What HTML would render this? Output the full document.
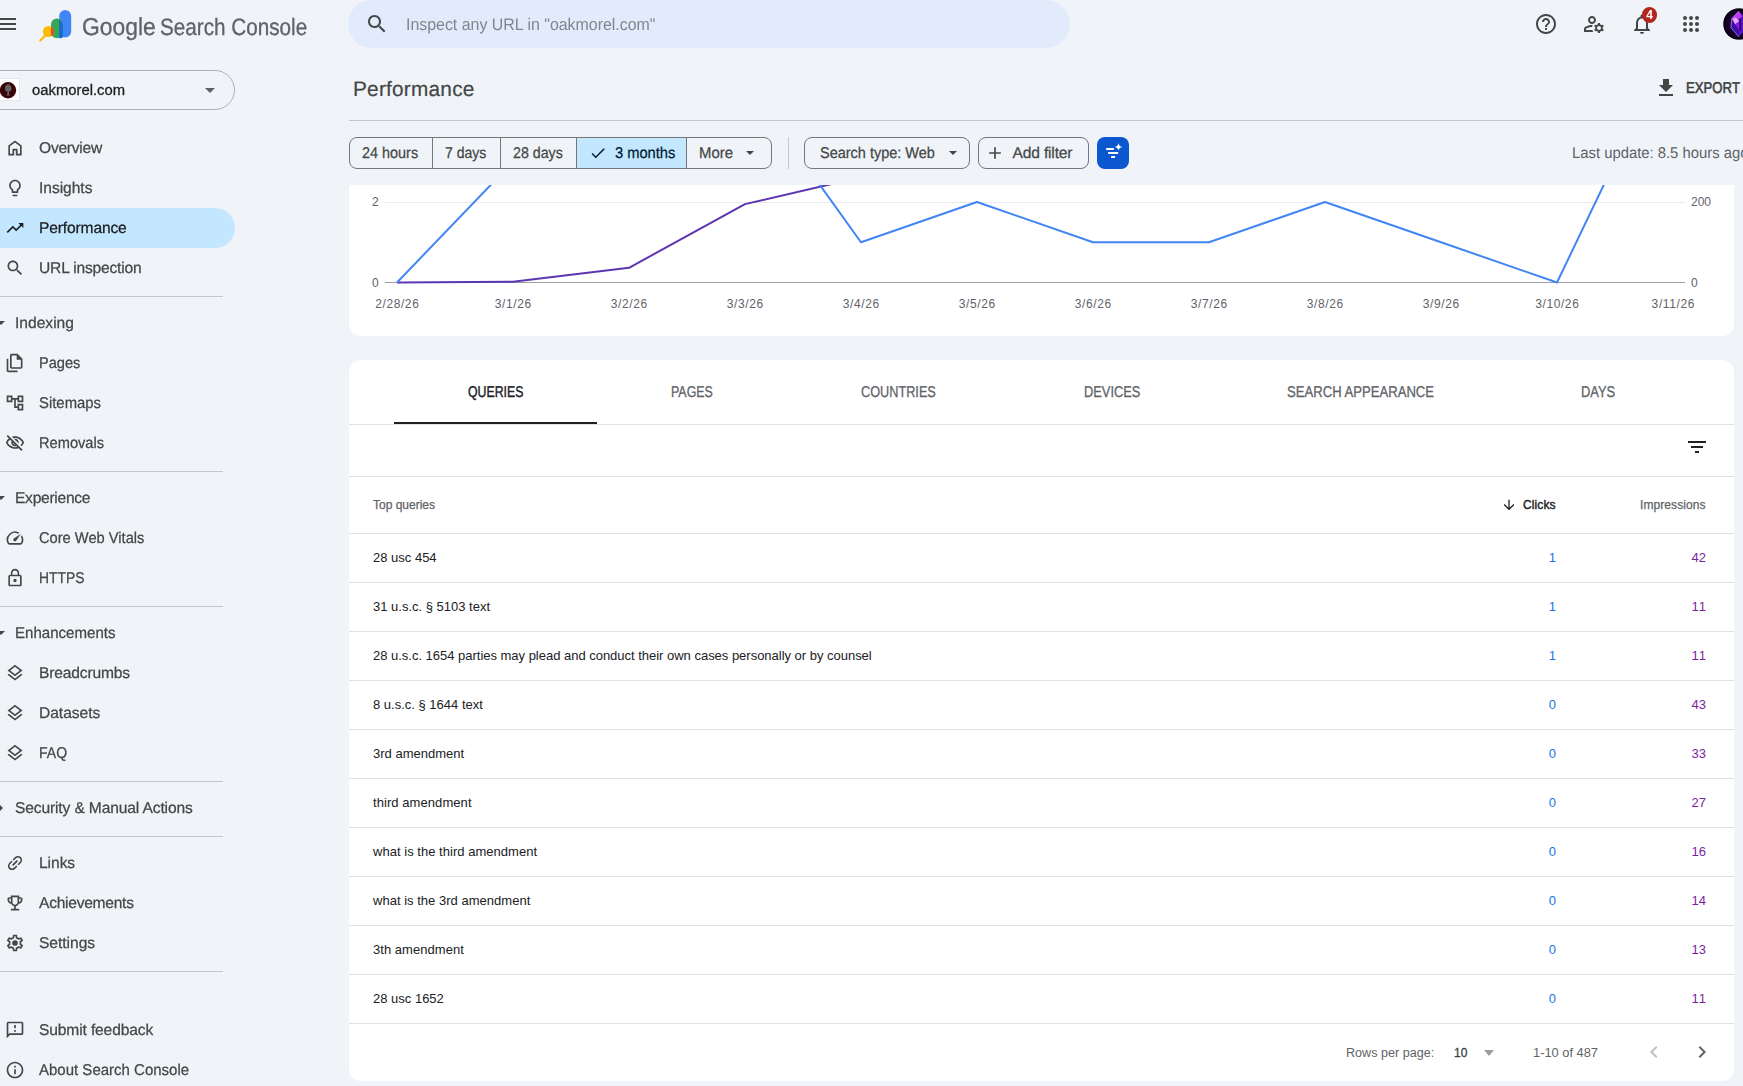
<!DOCTYPE html>
<html>
<head>
<meta charset="utf-8">
<title>Performance</title>
<style>
*{box-sizing:border-box;margin:0;padding:0}
html,body{width:1743px;height:1086px;overflow:hidden;background:#f0f4f9;font-family:"Liberation Sans",sans-serif;color:#1f1f1f}
#hdr,#side{position:absolute;left:0;top:0;width:1743px;height:1086px;will-change:transform}
#hdr{height:60px}
#hdr,#side{z-index:1}
#main{position:absolute;left:0;top:0;width:1743px;height:1086px}
.abs{position:absolute}
svg{display:block}
.t{position:absolute;white-space:nowrap;line-height:1}
/* nav */
.nav{position:absolute;left:0;height:40px;width:235px}
.nav svg{position:absolute;left:5px;top:10px;width:20px;height:20px;fill:#444746}
.nav span{position:absolute;left:39px;top:13px;font-size:15.600px;line-height:16px;text-rendering:geometricPrecision;color:#444746;white-space:nowrap;-webkit-text-stroke:0.25px #444746}
.nav.sel{background:#c2e7ff;border-radius:0 20px 20px 0}
.nav.sel span{color:#1b1c1d;-webkit-text-stroke:0.25px #1b1c1d}
.nav.sel svg{fill:#1b1c1d}
.grp span{left:15px}
.grp i{position:absolute;left:-3px;top:18px;width:0;height:0;border-left:4px solid transparent;border-right:4px solid transparent;border-top:4px solid #444746}
.hr{position:absolute;left:0;width:223px;height:1px;background:#c4c7c5}
/* chips */
.chip{position:absolute;top:137px;height:32px;border:1px solid #747775;font-size:14px;color:#1f1f1f;line-height:30px;white-space:nowrap;-webkit-text-stroke:0.2px #1f1f1f}
/* table */
.row{position:absolute;left:349px;width:1385px;height:49px;border-top:1px solid #e0e0e0}
.row .q{position:absolute;left:24px;top:16px;font-size:13px;line-height:15px;color:#202124;white-space:nowrap}
.row .c{position:absolute;right:178px;top:16px;font-size:13px;line-height:15px;color:#1a73e8}
.row .i{position:absolute;right:28px;top:16px;font-size:13px;line-height:15px;color:#7b1fa2}
.tab{position:absolute;top:385px;font-size:15.600px;line-height:16px;text-rendering:geometricPrecision;color:#5f6368;white-space:nowrap;-webkit-text-stroke:0.3px #5f6368;transform-origin:0 50%}
.xl{position:absolute;top:297px;font-size:12px;line-height:14px;color:#5f6368;white-space:nowrap;transform:translateX(-50%);letter-spacing:.6px;padding-left:.6px}
.ch{top:146px;font-size:15.600px;line-height:16px;text-rendering:geometricPrecision;color:#444746;-webkit-text-stroke:0.25px currentColor}
.ax{font-size:12px;line-height:14px;color:#5f6368}
.th{top:498px;font-size:12px;line-height:14px;-webkit-text-stroke:0.25px currentColor}
.ft{top:1046px;font-size:12px;line-height:14px;color:#5f6368}
.rt i{left:-1px;top:15.500px;border-top:4px solid transparent;border-bottom:4px solid transparent;border-left:4px solid #444746;border-right:none}
</style>
<style id="fit">
#insp{transform-origin:0 78%;transform:scale(0.948,1)}
#prop{transform-origin:0 78%;transform:scale(1.058,1)}
#n1{letter-spacing:-0.25px}
#n2{letter-spacing:-0.04px}
#n3{letter-spacing:-0.15px}
#n4{letter-spacing:-0.19px}
#n5{letter-spacing:0.00px}
#n6{transform-origin:0 78%;transform:scale(0.936,1)}
#n7{transform-origin:0 78%;transform:scale(0.954,1)}
#n8{transform-origin:0 78%;transform:scale(0.938,1)}
#n9{letter-spacing:-0.28px}
#n10{transform-origin:0 78%;transform:scale(0.940,1)}
#n11{transform-origin:0 78%;transform:scale(0.890,1)}
#n12{transform-origin:0 78%;transform:scale(0.966,1)}
#n13{letter-spacing:-0.17px}
#n14{letter-spacing:-0.04px}
#n15{transform-origin:0 78%;transform:scale(0.900,1)}
#n16{letter-spacing:-0.14px}
#n17{letter-spacing:-0.06px}
#n18{letter-spacing:-0.27px}
#n19{letter-spacing:-0.04px}
#n20{letter-spacing:-0.14px}
#n21{transform-origin:0 78%;transform:scale(0.962,1)}
#ttl{letter-spacing:0.23px}
#c1{transform-origin:0 78%;transform:scale(0.925,1)}
#c2{transform-origin:0 78%;transform:scale(0.900,1)}
#c3{transform-origin:0 78%;transform:scale(0.911,1)}
#c4{transform-origin:0 78%;transform:scale(0.941,1)}
#c5{transform-origin:0 78%;transform:scale(0.956,1)}
#c6{transform-origin:0 78%;transform:scale(0.929,1)}
#c7{letter-spacing:-0.17px}
#t1{transform-origin:0 78%;transform:scale(0.789,1)}
#t2{transform-origin:0 78%;transform:scale(0.796,1)}
#t3{transform-origin:0 78%;transform:scale(0.815,1)}
#t4{transform-origin:0 78%;transform:scale(0.824,1)}
#t5{transform-origin:0 78%;transform:scale(0.840,1)}
#t6{transform-origin:0 78%;transform:scale(0.829,1)}
#h1{letter-spacing:0.00px}
#h2{letter-spacing:0.10px}
#h3{letter-spacing:0.08px}
#f1{transform-origin:0 78%;transform:scale(1.049,1)}
#f2{letter-spacing:0.20px}
#f3{transform-origin:0 78%;transform:scale(1.070,1)}
</style>
</head>
<body>
<!-- ===== HEADER ===== -->
<div id="hdr">
  <svg class="abs" style="left:-5px;top:12px;width:24px;height:24px" viewBox="0 0 24 24"><path fill="#444746" d="M3 18h18v-2H3v2zm0-5h18v-2H3v2zm0-7v2h18V6H3z"/></svg>
  <!-- logo -->
  <svg class="abs" style="left:38px;top:8px;width:36px;height:36px" viewBox="0 0 36 36">
    <rect x="21.200" y="2" width="12" height="27.600" rx="6" fill="#4285f4"/>
    <rect x="13" y="10.500" width="11.800" height="19.700" rx="5.900" fill="#34a853"/>
    <path d="M21.200 30.200 V12 A5.900 5.900 0 0 1 24.800 16.400 V29.600 A6 6 0 0 1 21.200 30.200 Z" fill="#1967d2"/>
    <line x1="2.300" y1="32.500" x2="7.500" y2="27.300" stroke="#fbbc04" stroke-width="2.200" stroke-linecap="round"/>
    <circle cx="10.400" cy="23.500" r="5.500" fill="#fbbc04"/>
    <path d="M13 18.650 A5.500 5.500 0 0 1 13 28.350 Z" fill="#ea4335"/>
  </svg>
  <div class="t" id="gsa" style="left:82px;top:14px;font-size:24.500px;line-height:28px;color:#5f6368;-webkit-text-stroke:.3px #5f6368;text-rendering:geometricPrecision;transform-origin:0 50%;transform:scaleX(.933)">Google</div>
  <div class="t" id="gsb" style="left:159.500px;top:15px;font-size:23.600px;line-height:26px;color:#5f6368;-webkit-text-stroke:.3px #5f6368;text-rendering:geometricPrecision;transform-origin:0 50%;transform:scaleX(.877)">Search Console</div>
  <!-- search bar -->
  <div class="abs" style="left:348px;top:0;width:722px;height:48px;border-radius:24px;background:#e2ebfc"></div>
  <svg class="abs" style="left:365px;top:12px;width:24px;height:24px" viewBox="0 0 24 24"><path fill="#444746" d="M15.5 14h-.79l-.28-.27C15.41 12.59 16 11.11 16 9.5 16 5.91 13.09 3 9.5 3S3 5.91 3 9.5 5.91 16 9.5 16c1.61 0 3.09-.59 4.23-1.57l.27.28v.79l5 4.99L20.49 19l-4.99-5zm-6 0C7.01 14 5 11.990 5 9.5S7.01 5 9.500 5 14 7.010 14 9.500 11.990 14 9.500 14z"/></svg>
  <div class="t" id="insp" style="left:406.200px;top:16px;font-size:16.800px;line-height:18px;text-rendering:geometricPrecision;color:#80868b">Inspect any URL in "oakmorel.com"</div>
  <!-- right icons -->
  <svg class="abs" style="left:1534px;top:12px;width:24px;height:24px" viewBox="0 0 24 24"><path fill="#444746" d="M11 18h2v-2h-2v2zm1-16C6.480 2 2 6.480 2 12s4.480 10 10 10 10-4.480 10-10S17.520 2 12 2zm0 18c-4.410 0-8-3.590-8-8s3.590-8 8-8 8 3.590 8 8-3.590 8-8 8zm0-14c-2.210 0-4 1.790-4 4h2c0-1.100.9-2 2-2s2 .9 2 2c0 2-3 1.750-3 5h2c0-2.250 3-2.500 3-5 0-2.210-1.790-4-4-4z"/></svg>
  <svg class="abs" style="left:1582px;top:12px;width:24px;height:24px" viewBox="0 0 24 24" fill="#444746"><path d="M4 18v-.65c0-.34.16-.66.41-.81C6.100 15.530 8.030 15 10 15c.03 0 .05 0 .08.010.1-.7.3-1.370.59-1.980-.22-.02-.44-.03-.67-.03-2.420 0-4.680.67-6.610 1.820-.88.52-1.390 1.500-1.390 2.530V20h9.260c-.42-.6-.75-1.280-.97-2H4z"/><path d="M10 12c2.210 0 4-1.790 4-4s-1.790-4-4-4-4 1.790-4 4 1.790 4 4 4zm0-6c1.100 0 2 .9 2 2s-.9 2-2 2-2-.9-2-2 .9-2 2-2z"/><path d="M20.750 16c0-.22-.03-.42-.06-.63l1.140-1.010-1-1.730-1.450.49c-.32-.27-.68-.48-1.080-.63L18 11h-2l-.3 1.490c-.4.15-.76.36-1.080.63l-1.450-.49-1 1.730 1.140 1.010c-.03.21-.06.41-.06.63s.03.42.06.63l-1.140 1.010 1 1.730 1.450-.49c.32.27.68.48 1.080.63L16 21h2l.3-1.490c.4-.15.76-.36 1.080-.63l1.450.49 1-1.730-1.140-1.010c.03-.21.06-.41.06-.63zM17 18c-1.100 0-2-.9-2-2s.9-2 2-2 2 .9 2 2-.9 2-2 2z"/></svg>
  <svg class="abs" style="left:1630px;top:12px;width:24px;height:24px" viewBox="0 0 24 24"><path fill="#444746" d="M12 22c1.100 0 2-.9 2-2h-4c0 1.100.9 2 2 2zm6-6v-5c0-3.070-1.630-5.640-4.500-6.320V4c0-.83-.67-1.500-1.500-1.500s-1.500.67-1.500 1.500v.68C7.640 5.360 6 7.920 6 11v5l-2 2v1h16v-1l-2-2zm-2 1H8v-6c0-2.480 1.510-4.500 4-4.500s4 2.020 4 4.500v6z"/></svg>
  <div class="abs" style="left:1641.800px;top:7px;width:15.600px;height:15.600px;border-radius:8px;background:#b3261e"></div>
  <div class="t" id="bdg" style="left:1646.300px;top:9px;font-size:12px;line-height:12px;color:#fff;font-weight:bold">4</div>
  <svg class="abs" style="left:1679px;top:12px;width:24px;height:24px" viewBox="0 0 24 24" fill="#444746"><circle cx="6" cy="6" r="2"/><circle cx="12" cy="6" r="2"/><circle cx="18" cy="6" r="2"/><circle cx="6" cy="12" r="2"/><circle cx="12" cy="12" r="2"/><circle cx="18" cy="12" r="2"/><circle cx="6" cy="18" r="2"/><circle cx="12" cy="18" r="2"/><circle cx="18" cy="18" r="2"/></svg>
  <svg class="abs" style="left:1723px;top:8px;width:32px;height:32px" viewBox="0 0 32 32"><defs><radialGradient id="ag" cx="50%" cy="50%" r="50%"><stop offset="0" stop-color="#3a0a5a"/><stop offset=".7" stop-color="#16032a"/><stop offset="1" stop-color="#07000f"/></radialGradient></defs><circle cx="16" cy="16" r="16.500" fill="#fff"/><circle cx="16" cy="16" r="15.800" fill="url(#ag)"/><path d="M15.800 3.200 L8.900 10.400 L7.900 19.500 L15.800 28.800 L22 22 L22 9 Z" fill="#5a14c8"/><path d="M15.800 3.200 L8.900 10.400 L12.500 13 L19 8.500 Z" fill="#c03cf0"/><path d="M9.400 11 L12.600 9.500 L16.500 13 L12 16.500 Z" fill="#e6a6f4"/><path d="M12 16.500 L16.500 13 L16.500 23 Z" fill="#9a12ee"/><path d="M8.900 12 L8.300 19.500 L15.800 28 L15.800 22 Z" fill="#3410a8"/><path d="M16.500 11.500 L18 10.500 L18 22 L16.500 23 Z" fill="#12044a"/><path d="M15.800 3.200 L8.900 10.400 L7.900 19.500 L15.800 28.800" fill="none" stroke="#b982d8" stroke-width=".8"/></svg>
</div>

<!-- ===== SIDEBAR ===== -->
<div id="side">
  <div class="abs" style="left:-20px;top:70px;width:255px;height:40px;border:1px solid #adb0ae;border-radius:20px"></div>
  <div class="abs" style="left:-4px;top:78px;width:23.500px;height:23px;background:#fff;border:1px solid #e3e6ea"></div>
  <svg class="abs" style="left:0;top:81.500px;width:17px;height:17px" viewBox="0 0 17 17"><circle cx="8" cy="8.300" r="8.200" fill="#3a0406"/><path d="M8.200 2.600c-2.300 0-3.700 2.400-3.300 4.600.3 1.600 1.300 2.300 2.600 2.500l-.3 3.100c-.5.100-1 .3-1 .6h4c0-.3-.5-.5-1-.6l-.3-3.100c1.300-.2 2.300-.9 2.600-2.500.4-2.200-1-4.600-3.300-4.600z" fill="#626262"/></svg>
  <div class="t" id="prop" style="left:32px;top:82px;font-size:14px;line-height:17px;color:#1f1f1f;-webkit-text-stroke:0.3px #1f1f1f">oakmorel.com</div>
  <div class="abs" style="left:205px;top:88px;width:0;height:0;border-left:5px solid transparent;border-right:5px solid transparent;border-top:5px solid #5f6368"></div>
  <div class="nav" style="top:128px"><svg viewBox="0 -960 960 960"><path d="M240-200h120v-240h240v240h120v-360L480-740 240-560v360Zm-80 80v-480l320-240 320 240v480H520v-240h-80v240H160Z"/></svg><span id="n1">Overview</span></div>
  <div class="nav" style="top:168px"><svg viewBox="0 0 24 24"><path d="M9 21c0 .55.45 1 1 1h4c.55 0 1-.45 1-1v-1H9v1zm3-19C8.14 2 5 5.14 5 9c0 2.38 1.19 4.47 3 5.74V17c0 .55.45 1 1 1h6c.55 0 1-.45 1-1v-2.260c1.81-1.27 3-3.36 3-5.74 0-3.86-3.14-7-7-7zm2.85 11.1l-.85.6V16h-4v-2.300l-.85-.6C7.8 12.16 7 10.63 7 9c0-2.76 2.24-5 5-5s5 2.24 5 5c0 1.63-.8 3.16-2.15 4.100z"/></svg><span id="n2">Insights</span></div>
  <div class="nav sel" style="top:208px"><svg viewBox="0 0 24 24"><path d="M16 6l2.29 2.29-4.88 4.88-4-4L2 16.59 3.41 18l6-6 4 4 6.3-6.29L22 12V6z"/></svg><span id="n3">Performance</span></div>
  <div class="nav" style="top:248px"><svg viewBox="0 0 24 24"><path d="M15.5 14h-.79l-.28-.27C15.41 12.59 16 11.11 16 9.5 16 5.91 13.09 3 9.5 3S3 5.91 3 9.5 5.91 16 9.5 16c1.61 0 3.09-.59 4.23-1.57l.27.28v.79l5 4.99L20.49 19l-4.99-5zm-6 0C7.01 14 5 11.99 5 9.5S7.01 5 9.5 5 14 7.01 14 9.500 11.990 14 9.5 14z"/></svg><span id="n4">URL inspection</span></div>
  <div class="hr" style="top:296px"></div>
  <div class="nav grp" style="top:303px"><i></i><span id="n5">Indexing</span></div>
  <div class="nav" style="top:343px"><svg viewBox="0 -960 960 960"><path d="M760-200H320q-33 0-56.500-23.500T240-280v-560q0-33 23.500-56.500T320-920h280l240 240v400q0 33-23.500 56.500T760-200ZM560-640v-200H320v560h440v-360H560ZM160-40q-33 0-56.500-23.500T80-120v-560h80v560h440v80H160Z"/></svg><span id="n6">Pages</span></div>
  <div class="nav" style="top:383px"><svg viewBox="0 0 24 24"><path d="M22 11V3h-7v3H9V3H2v8h7V8h2v10h4v3h7v-8h-7v3h-2V8h2v3h7zM7 9H4V5h3v4zm10 6h3v4h-3v-4zm0-10h3v4h-3V5z"/></svg><span id="n7">Sitemaps</span></div>
  <div class="nav" style="top:423px"><svg viewBox="0 0 24 24"><path d="M12 6c3.79 0 7.17 2.13 8.82 5.5-.59 1.22-1.42 2.27-2.41 3.12l1.41 1.41c1.39-1.23 2.49-2.77 3.18-4.53C21.27 7.11 17 4 12 4c-1.27 0-2.49.2-3.64.57l1.65 1.65C10.66 6.09 11.32 6 12 6zm-1.07 1.14L13 9.21c.57.25 1.03.71 1.28 1.28l2.07 2.07c.08-.34.14-.7.14-1.07C16.5 9.01 14.48 7 12 7c-.37 0-.72.05-1.07.14zM2.01 3.87l2.68 2.68C3.06 7.83 1.77 9.53 1 11.5 2.73 15.89 7 19 12 19c1.520 0 2.98-.29 4.32-.82l3.42 3.42 1.41-1.41L3.42 2.45 2.01 3.87zm7.5 7.5l2.61 2.61c-.04.01-.08.02-.12.02-1.38 0-2.5-1.12-2.5-2.5 0-.05.01-.08.01-.13zm-3.4-3.4l1.75 1.75c-.23.55-.36 1.15-.36 1.78 0 2.48 2.02 4.5 4.5 4.5.63 0 1.23-.13 1.77-.36l.98.98c-.88.24-1.8.38-2.75.38-3.79 0-7.17-2.13-8.82-5.5.7-1.43 1.72-2.61 2.93-3.53z"/></svg><span id="n8">Removals</span></div>
  <div class="hr" style="top:471px"></div>
  <div class="nav grp" style="top:478px"><i></i><span id="n9">Experience</span></div>
  <div class="nav" style="top:518px"><svg viewBox="0 0 24 24"><path d="M20.38 8.57l-1.23 1.85a8 8 0 0 1-.22 7.58H5.07A8 8 0 0 1 15.58 6.85l1.85-1.23A10 10 0 0 0 3.35 19a2 2 0 0 0 1.720 1h13.85a2 2 0 0 0 1.74-1 10 10 0 0 0-.27-10.440zm-9.79 6.84a2 2 0 0 0 2.83 0l5.66-8.490-8.49 5.66a2 2 0 0 0 0 2.830z"/></svg><span id="n10">Core Web Vitals</span></div>
  <div class="nav" style="top:558px"><svg viewBox="0 0 24 24"><path d="M12 17c1.1 0 2-.9 2-2s-.9-2-2-2-2 .9-2 2 .9 2 2 2zm6-9h-1V6c0-2.76-2.24-5-5-5S7 3.24 7 6v2H6c-1.1 0-2 .9-2 2v10c0 1.1.9 2 2 2h12c1.100 0 2-.9 2-2V10c0-1.1-.9-2-2-2zM8.9 6c0-1.71 1.39-3.1 3.1-3.100s3.1 1.390 3.1 3.100v2H8.900V6zM18 20H6V10h12v10z"/></svg><span id="n11">HTTPS</span></div>
  <div class="hr" style="top:606px"></div>
  <div class="nav grp" style="top:613px"><i></i><span id="n12">Enhancements</span></div>
  <div class="nav" style="top:653px"><svg viewBox="0 0 24 24"><path d="M11.99 18.54l-7.37-5.73L3 14.07l9 7 9-7-1.63-1.270-7.380 5.740zM12 16l7.36-5.730L21 9l-9-7-9 7 1.630 1.270L12 16zm0-11.470L17.740 9 12 13.470 6.260 9 12 4.530z"/></svg><span id="n13">Breadcrumbs</span></div>
  <div class="nav" style="top:693px"><svg viewBox="0 0 24 24"><path d="M11.99 18.54l-7.37-5.73L3 14.07l9 7 9-7-1.63-1.270-7.380 5.740zM12 16l7.36-5.730L21 9l-9-7-9 7 1.630 1.270L12 16zm0-11.470L17.740 9 12 13.470 6.260 9 12 4.530z"/></svg><span id="n14">Datasets</span></div>
  <div class="nav" style="top:733px"><svg viewBox="0 0 24 24"><path d="M11.99 18.54l-7.37-5.73L3 14.07l9 7 9-7-1.63-1.270-7.380 5.740zM12 16l7.36-5.730L21 9l-9-7-9 7 1.630 1.270L12 16zm0-11.470L17.740 9 12 13.470 6.260 9 12 4.530z"/></svg><span id="n15">FAQ</span></div>
  <div class="hr" style="top:781px"></div>
  <div class="nav grp rt" style="top:788px"><i></i><span id="n16">Security &amp; Manual Actions</span></div>
  <div class="hr" style="top:836px"></div>
  <div class="nav" style="top:843px"><svg viewBox="0 0 24 24"><g transform="rotate(-45 12 12)"><path d="M3.9 12c0-1.71 1.39-3.1 3.1-3.1h4V7H7c-2.76 0-5 2.24-5 5s2.24 5 5 5h4v-1.9H7c-1.71 0-3.1-1.39-3.1-3.1zM8 13h8v-2H8v2zm9-6h-4v1.900h4c1.710 0 3.1 1.390 3.1 3.100s-1.390 3.100-3.100 3.100h-4V17h4c2.760 0 5-2.240 5-5s-2.240-5-5-5z"/></g></svg><span id="n17">Links</span></div>
  <div class="nav" style="top:883px"><svg viewBox="0 0 24 24"><path d="M19 5h-2V3H7v2H5c-1.1 0-2 .9-2 2v1c0 2.55 1.92 4.63 4.39 4.940.63 1.5 1.980 2.630 3.610 2.960V19H7v2h10v-2h-4v-3.100c1.630-.33 2.980-1.460 3.610-2.960C19.080 12.630 21 10.550 21 8V7c0-1.100-.9-2-2-2zM5 8V7h2v3.820C5.840 10.400 5 9.300 5 8zm7 6c-1.650 0-3-1.350-3-3V5h6v6c0 1.650-1.350 3-3 3zm7-6c0 1.300-.84 2.400-2 2.820V7h2v1z"/></svg><span id="n18">Achievements</span></div>
  <div class="nav" style="top:923px"><svg viewBox="0 0 24 24"><path d="M19.430 12.980c.04-.32.07-.64.07-.98 0-.34-.03-.66-.07-.98l2.110-1.650c.19-.15.24-.42.12-.64l-2-3.460c-.09-.16-.26-.25-.44-.25-.06 0-.12.01-.17.03l-2.490 1c-.52-.4-1.080-.73-1.690-.98l-.38-2.650C14.460 2.180 14.250 2 14 2h-4c-.25 0-.46.18-.49.42l-.38 2.650c-.61.25-1.170.59-1.690.98l-2.490-1c-.06-.02-.12-.03-.18-.03-.17 0-.34.09-.43.25l-2 3.460c-.13.22-.07.49.12.64l2.110 1.650c-.04.32-.07.65-.07.98 0 .33.03.66.07.98l-2.110 1.650c-.19.15-.24.42-.12.64l2 3.460c.09.16.26.25.44.25.06 0 .12-.01.17-.03l2.490-1c.52.4 1.080.73 1.690.98l.38 2.650c.03.24.24.42.49.42h4c.25 0 .46-.18.49-.42l.38-2.650c.61-.25 1.170-.59 1.690-.98l2.490 1c.06.02.12.03.18.03.17 0 .34-.09.43-.25l2-3.460c.12-.22.07-.49-.12-.64l-2.110-1.650zm-1.980-1.710c.04.31.05.52.05.73 0 .21-.02.43-.05.73l-.14 1.130.89.7 1.080.84-.7 1.210-1.270-.51-1.040-.42-.9.68c-.43.32-.84.56-1.250.73l-1.060.43-.16 1.130-.2 1.350h-1.400l-.19-1.350-.16-1.130-1.060-.43c-.43-.18-.83-.41-1.230-.71l-.91-.7-1.060.43-1.270.51-.7-1.210 1.080-.84.89-.7-.14-1.130c-.03-.31-.05-.54-.05-.74s.02-.43.05-.73l.14-1.130-.89-.7-1.080-.84.7-1.210 1.270.51 1.040.42.9-.68c.43-.32.84-.56 1.250-.73l1.060-.43.16-1.130.2-1.350h1.390l.19 1.350.16 1.130 1.060.43c.43.18.83.41 1.230.71l.91.7 1.060-.43 1.270-.51.7 1.210-1.070.85-.89.7.14 1.130z"/><circle cx="12" cy="12" r="3.400"/></svg><span id="n19">Settings</span></div>
  <div class="hr" style="top:971px"></div>
  <div class="nav" style="top:1010px"><svg viewBox="0 0 24 24"><path d="M20 2H4c-1.1 0-1.990.9-1.990 2L2 22l4-4h14c1.100 0 2-.9 2-2V4c0-1.100-.9-2-2-2zm0 14H5.170l-.59.59-.58.58V4h16v12zm-9-4h2v2h-2zm0-6h2v4h-2z"/></svg><span id="n20">Submit feedback</span></div>
  <div class="nav" style="top:1050px"><svg viewBox="0 0 24 24"><path d="M11 7h2v2h-2zm0 4h2v6h-2zm1-9C6.480 2 2 6.480 2 12s4.480 10 10 10 10-4.480 10-10S17.520 2 12 2zm0 18c-4.410 0-8-3.590-8-8s3.590-8 8-8 8 3.590 8 8-3.590 8-8 8z"/></svg><span id="n21">About Search Console</span></div>
</div>

<!-- ===== MAIN ===== -->
<div id="main">
  <div class="t" id="ttl" style="left:353px;top:78px;font-size:20.800px;line-height:24px;text-rendering:geometricPrecision;color:#444746;-webkit-text-stroke:.2px #444746;">Performance</div>
  <svg class="abs" style="left:1654px;top:76px;width:24px;height:24px" viewBox="0 0 24 24"><path fill="#444746" d="M19 9h-4V3H9v6H5l7 7 7-7zM5 18v2h14v-2H5z"/></svg>
  <div class="t" id="exp" style="left:1686px;top:81px;font-size:15.600px;line-height:16px;text-rendering:geometricPrecision;color:#3c4043;-webkit-text-stroke:0.55px #3c4043;transform-origin:0 50%;transform:scaleX(.845)">EXPORT</div>
  <div class="abs" style="left:349px;top:120px;width:1394px;height:1px;background:#c4c7c5"></div>

  <!-- date chips -->
  <div class="abs" style="left:349px;top:137px;width:423px;height:32px;border:1px solid #747775;border-radius:8px;overflow:hidden">
    <div class="abs" style="left:226px;top:0;width:110px;height:30px;background:#c2e7ff"></div>
    <div class="abs" style="left:82px;top:0;width:1px;height:30px;background:#747775"></div>
    <div class="abs" style="left:150px;top:0;width:1px;height:30px;background:#747775"></div>
    <div class="abs" style="left:226px;top:0;width:1px;height:30px;background:#747775"></div>
    <div class="abs" style="left:336px;top:0;width:1px;height:30px;background:#747775"></div>
  </div>
  <div class="t ch" id="c1" style="left:362px">24 hours</div>
  <div class="t ch" id="c2" style="left:445px">7 days</div>
  <div class="t ch" id="c3" style="left:513px">28 days</div>
  <svg class="abs" style="left:589px;top:144px;width:18px;height:18px" viewBox="0 0 24 24"><path fill="#001d35" d="M9 16.17L4.830 12l-1.420 1.410L9 19 21 7l-1.410-1.410z"/></svg>
  <div class="t ch" id="c4" style="left:615px;color:#001d35">3 months</div>
  <div class="t ch" id="c5" style="left:699px">More</div>
  <div class="abs" style="left:746px;top:151px;width:0;height:0;border-left:4px solid transparent;border-right:4px solid transparent;border-top:4px solid #444746"></div>
  <div class="abs" style="left:788px;top:137px;width:1px;height:32px;background:#c4c7c5"></div>
  <div class="abs" style="left:804px;top:137px;width:166px;height:32px;border:1px solid #747775;border-radius:8px"></div>
  <div class="t ch" id="c6" style="left:820px">Search type: Web</div>
  <div class="abs" style="left:949px;top:151px;width:0;height:0;border-left:4px solid transparent;border-right:4px solid transparent;border-top:4px solid #444746"></div>
  <div class="abs" style="left:978px;top:137px;width:111px;height:32px;border:1px solid #747775;border-radius:8px"></div>
  <svg class="abs" style="left:984.600px;top:143.300px;width:20px;height:20px" viewBox="0 0 24 24"><path fill="#444746" d="M19 13h-6v6h-2v-6H5v-2h6V5h2v6h6v2z"/></svg>
  <div class="t ch" id="c7" style="left:1012.500px">Add filter</div>
  <div class="abs" style="left:1097px;top:137px;width:32px;height:32px;border-radius:8px;background:#0b57d0"></div>
  <svg class="abs" style="left:1097px;top:137px;width:32px;height:32px" viewBox="0 0 32 32" fill="#fff"><rect x="9" y="11" width="8" height="1.900" rx=".4"/><rect x="11" y="15" width="10.200" height="1.900" rx=".4"/><rect x="14" y="19.100" width="4.100" height="1.900" rx=".4"/><path d="M21.500 6 C21.900 8.500 22.900 9.500 25.400 9.900 C22.900 10.300 21.900 11.300 21.500 13.800 C21.100 11.300 20.100 10.300 17.600 9.900 C20.100 9.500 21.100 8.500 21.500 6Z"/></svg>
  <div class="t" id="lu" style="left:1572px;top:146px;font-size:15.600px;line-height:16px;color:#5f6368;text-rendering:geometricPrecision;transform-origin:0 50%;transform:scaleX(.951)">Last update: 8.5 hours ago</div>

  <!-- chart card -->
  <div class="abs" style="left:349px;top:185px;width:1385px;height:151px;background:#fff;border-radius:0 0 12px 12px;overflow:hidden">
    <svg class="abs" style="left:0;top:0;width:1385px;height:151px" viewBox="349 185 1385 151">
      <line x1="385" y1="202" x2="1685" y2="202" stroke="#e8eaed" stroke-width="1" shape-rendering="crispEdges" transform="translate(0,.5)"/>
      <line x1="385" y1="282" x2="1685" y2="282" stroke="#9aa0a6" stroke-width="1" shape-rendering="crispEdges" transform="translate(0,.5)"/>
      <polyline fill="none" stroke="#5e35b1" stroke-width="2" stroke-linejoin="round" points="397,282.500 513,281.700 629,267.800 745,204.100 861,177.200 977,120 1093,100 1209,90 1325,80 1441,70 1557,60 1673,50"/>
      <polyline fill="none" stroke="#4285f4" stroke-width="2" stroke-linejoin="round" points="397,282.500 513,161.750 629,120 745,80.750 861,242.250 977,202 1093,242.250 1209,242.250 1325,202 1441,242.250 1557,282.500 1673,40.500"/>
    </svg>
  </div>
  <div class="t ax" style="left:372px;top:195px">2</div>
  <div class="t ax" style="left:372px;top:276px">0</div>
  <div class="t ax" style="left:1691px;top:195px">200</div>
  <div class="t ax" style="left:1691px;top:276px">0</div>
  <div class="xl" style="left:397px">2/28/26</div>
  <div class="xl" style="left:513px">3/1/26</div>
  <div class="xl" style="left:629px">3/2/26</div>
  <div class="xl" style="left:745px">3/3/26</div>
  <div class="xl" style="left:861px">3/4/26</div>
  <div class="xl" style="left:977px">3/5/26</div>
  <div class="xl" style="left:1093px">3/6/26</div>
  <div class="xl" style="left:1209px">3/7/26</div>
  <div class="xl" style="left:1325px">3/8/26</div>
  <div class="xl" style="left:1441px">3/9/26</div>
  <div class="xl" style="left:1557px">3/10/26</div>
  <div class="xl" style="left:1673px">3/11/26</div>

  <!-- table card -->
  <div class="abs" style="left:349px;top:360px;width:1385px;height:721px;background:#fff;border-radius:12px"></div>
  <div class="tab" id="t1" style="left:468px;color:#202124;-webkit-text-stroke:0.4px #202124">QUERIES</div>
  <div class="tab" id="t2" style="left:671px">PAGES</div>
  <div class="tab" id="t3" style="left:861px">COUNTRIES</div>
  <div class="tab" id="t4" style="left:1084px">DEVICES</div>
  <div class="tab" id="t5" style="left:1287px">SEARCH APPEARANCE</div>
  <div class="tab" id="t6" style="left:1581px">DAYS</div>
  <div class="abs" style="left:394px;top:422px;width:203px;height:2px;background:#202124"></div>
  <div class="abs" style="left:349px;top:424px;width:1385px;height:1px;background:#e0e0e0"></div>
  <svg class="abs" style="left:1685px;top:435px;width:24px;height:24px" viewBox="0 0 24 24"><path fill="#202124" d="M10 18h4v-2h-4v2zM3 6v2h18V6H3zm3 7h12v-2H6v2z"/></svg>
  <div class="abs" style="left:349px;top:476px;width:1385px;height:1px;background:#e0e0e0"></div>
  <div class="t th" id="h1" style="left:373px;color:#5f6368">Top queries</div>
  <svg class="abs" style="left:1501px;top:497px;width:16px;height:16px" viewBox="0 0 24 24"><path fill="#202124" d="M20 12l-1.410-1.410L13 16.170V4h-2v12.170l-5.580-5.590L4 12l8 8 8-8z"/></svg>
  <div class="t th" id="h2" style="left:1523px;color:#202124;-webkit-text-stroke:0.4px #202124">Clicks</div>
  <div class="t th" id="h3" style="left:1640px;color:#5f6368">Impressions</div>

  <div class="row" style="top:533px"><span class="q" id="r1">28 usc 454</span><span class="c">1</span><span class="i">42</span></div>
  <div class="row" style="top:582px"><span class="q" id="r2">31 u.s.c. § 5103 text</span><span class="c">1</span><span class="i" style="letter-spacing:1px;right:27px">11</span></div>
  <div class="row" style="top:631px"><span class="q" id="r3" style="letter-spacing:-.016px">28 u.s.c. 1654 parties may plead and conduct their own cases personally or by counsel</span><span class="c">1</span><span class="i" style="letter-spacing:1px;right:27px">11</span></div>
  <div class="row" style="top:680px"><span class="q" id="r4">8 u.s.c. § 1644 text</span><span class="c">0</span><span class="i">43</span></div>
  <div class="row" style="top:729px"><span class="q" id="r5">3rd amendment</span><span class="c">0</span><span class="i">33</span></div>
  <div class="row" style="top:778px"><span class="q" id="r6" style="letter-spacing:0.07px">third amendment</span><span class="c">0</span><span class="i">27</span></div>
  <div class="row" style="top:827px"><span class="q" id="r7" style="letter-spacing:0.03px">what is the third amendment</span><span class="c">0</span><span class="i">16</span></div>
  <div class="row" style="top:876px"><span class="q" id="r8" style="letter-spacing:0.02px">what is the 3rd amendment</span><span class="c">0</span><span class="i">14</span></div>
  <div class="row" style="top:925px"><span class="q" id="r9" style="letter-spacing:0.04px">3th amendment</span><span class="c">0</span><span class="i">13</span></div>
  <div class="row" style="top:974px"><span class="q" id="r10">28 usc 1652</span><span class="c">0</span><span class="i" style="letter-spacing:1px;right:27px">11</span></div>
  <div class="abs" style="left:349px;top:1023px;width:1385px;height:1px;background:#e0e0e0"></div>

  <div class="t ft" id="f1" style="left:1346px">Rows per page:</div>
  <div class="t ft" id="f2" style="left:1454px;color:#3c4043;-webkit-text-stroke:0.3px #3c4043">10</div>
  <div class="abs" style="left:1484px;top:1050px;width:0;height:0;border-left:5.500px solid transparent;border-right:5.500px solid transparent;border-top:6px solid #9aa0a6"></div>
  <div class="t ft" id="f3" style="left:1533px">1-10 of 487</div>
  <svg class="abs" style="left:1642px;top:1040px;width:24px;height:24px" viewBox="0 0 24 24"><path fill="#bdc1c6" d="M15.410 7.410L14 6l-6 6 6 6 1.410-1.410L10.830 12z"/></svg>
  <svg class="abs" style="left:1690px;top:1040px;width:24px;height:24px" viewBox="0 0 24 24"><path fill="#5f6368" d="M10 6L8.590 7.410 13.170 12l-4.580 4.590L10 18l6-6z"/></svg>
</div>
</body>
</html>
